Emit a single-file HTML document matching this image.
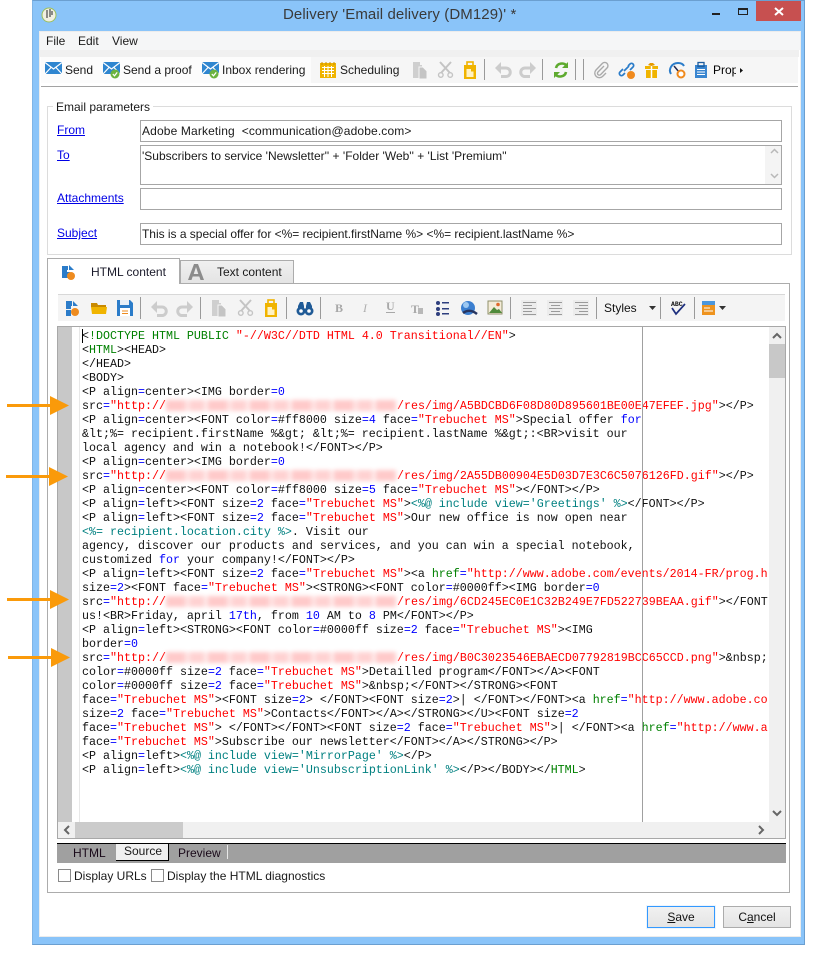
<!DOCTYPE html>
<html><head><meta charset="utf-8"><title>Delivery</title>
<style>
html,body{margin:0;padding:0;background:#fff}
body{width:825px;height:965px;position:relative;overflow:hidden;font-family:"Liberation Sans",sans-serif;font-size:12px;color:#1a1a1a}
.a{position:absolute;box-sizing:border-box}
.t{position:absolute;white-space:pre;line-height:16px;height:16px}
.l{color:#0000e6;text-decoration:underline}
.i{position:absolute;box-sizing:border-box;left:140px;width:642px;border:1px solid #a6a6a6;background:#fff;padding:2px 1px;white-space:pre;line-height:16px}
pre{position:absolute;margin:0;left:82px;top:329px;width:687px;height:490px;overflow:hidden;font-family:"Liberation Mono",monospace;font-size:11.667px;line-height:14px;color:#111}
.g{color:#008000}.r{color:#f00}.b{color:#00f}.c{color:#008080}
.z{display:inline-block;width:231px;height:11px;vertical-align:-2px;background:repeating-linear-gradient(90deg,#ffcaca 0 19px,#ffe4e4 19px 24px,#ffd2d2 24px 38px,#ffecec 38px 42px);filter:blur(2px)}
.s{position:absolute;width:1px;background:#9a9a9a}
u{text-underline-offset:1px}
</style></head><body>

<div class="a" style="left:32px;top:0;width:773px;height:945px;background:#8ac4f9;border:1px solid #6b9fd0;border-left-color:#7fb4e6"></div>
<div class="a" style="left:39px;top:31px;width:762px;height:906px;background:#fff;border:1px solid #ececec"></div>
<div class="a" style="left:756px;top:1px;width:45px;height:20px;background:#c75050"></div>
<div class="t" style="left:283px;top:7px;font-size:15px;color:#3a3a3a;letter-spacing:.1px">Delivery 'Email delivery (DM129)' *</div>

<div class="a" style="left:40px;top:32px;width:760px;height:18px;background:#f5f6f7"></div>
<div class="a" style="left:40px;top:50px;width:759px;height:7px;background:#f0f0f0"></div>
<div class="a" style="left:41px;top:57px;width:757px;height:26px;background:#f6f6f6"></div>
<div class="a" style="left:41px;top:57px;width:270px;height:26px;background:#fcfcfc"></div>
<div class="a" style="left:41px;top:86px;width:757px;height:1px;background:#a3a3a3"></div>
<div class="t" style="left:46px;top:33px">File</div>
<div class="t" style="left:78px;top:33px">Edit</div>
<div class="t" style="left:112px;top:33px">View</div>
<div class="t" style="left:65px;top:62px">Send</div>
<div class="t" style="left:123px;top:62px">Send a proof</div>
<div class="t" style="left:222px;top:62px">Inbox rendering</div>
<div class="t" style="left:340px;top:62px">Scheduling</div>
<div class="a" style="left:713px;top:62px;width:23px;height:16px;overflow:hidden;white-space:pre;line-height:16px;color:#000">Properties</div>
<div class="s" style="left:484px;top:59px;height:21px"></div>
<div class="s" style="left:542px;top:59px;height:21px"></div>
<div class="s" style="left:575px;top:59px;height:21px"></div>
<div class="s" style="left:583px;top:59px;height:21px"></div>

<div class="a" style="left:47px;top:106px;width:745px;height:149px;border:1px solid #dcdcdc"></div>
<div class="t" style="left:53px;top:99px;background:#fff;padding:0 3px;color:#1a1a1a">Email parameters</div>
<div class="t l" style="left:57px;top:122px">From</div>
<div class="t l" style="left:57px;top:147px">To</div>
<div class="t l" style="left:57px;top:190px">Attachments</div>
<div class="t l" style="left:57px;top:225px">Subject</div>
<div class="i" style="top:120px;height:22px;letter-spacing:.14px">Adobe Marketing  &lt;communication@adobe.com&gt;</div>
<div class="i" style="top:145px;height:40px">'Subscribers to service 'Newsletter'' + 'Folder 'Web'' + 'List 'Premium''</div>
<div class="a" style="left:765px;top:146px;width:16px;height:38px;background:#f4f4f4"></div>
<div class="i" style="top:188px;height:22px"></div>
<div class="i" style="top:223px;height:22px;letter-spacing:-.02px">This is a special offer for &lt;%= recipient.firstName %&gt; &lt;%= recipient.lastName %&gt;</div>

<div class="a" style="left:47px;top:283px;width:743px;height:610px;border:1px solid #acacac;background:#fff"></div>
<div class="a" style="left:180px;top:260px;width:114px;height:24px;border:1px solid #acacac;background:linear-gradient(#f0f0f0,#e4e4e4)"></div>
<div class="a" style="left:47px;top:258px;width:133px;height:26px;border:1px solid #acacac;border-bottom:0;background:#fff"></div>
<div class="t" style="left:91px;top:264px;color:#1a1a2a">HTML content</div>
<div class="t" style="left:217px;top:264px">Text content</div>

<div class="a" style="left:58px;top:294px;width:727px;height:27px;background:#f4f4f4;border-top:1px solid #d8d8d8"></div>
<div class="s" style="left:140px;top:297px;height:22px"></div>
<div class="s" style="left:200px;top:297px;height:22px"></div>
<div class="s" style="left:286px;top:297px;height:22px"></div>
<div class="s" style="left:320px;top:297px;height:22px"></div>
<div class="s" style="left:510px;top:297px;height:22px"></div>
<div class="s" style="left:596px;top:297px;height:22px"></div>
<div class="s" style="left:660px;top:297px;height:22px"></div>
<div class="s" style="left:694px;top:297px;height:22px"></div>
<div class="t" style="left:604px;top:300px;color:#111">Styles</div>

<div class="a" style="left:57px;top:326px;width:729px;height:513px;border:1px solid #a8a8a8;background:#fff"></div>
<div class="a" style="left:58px;top:327px;width:14px;height:495px;background:#c8c8c8"></div>
<div class="a" style="left:79px;top:327px;width:1px;height:495px;background:#e8e8e8"></div>
<div class="a" style="left:769px;top:327px;width:16px;height:511px;background:#f0f0f0"></div>
<div class="a" style="left:769px;top:344px;width:16px;height:34px;background:#c8c8c8"></div>
<div class="a" style="left:58px;top:822px;width:727px;height:16px;background:#f0f0f0"></div>
<div class="a" style="left:75px;top:822px;width:108px;height:16px;background:#cbcbcb"></div>

<pre>&lt;<span class="g">!DOCTYPE HTML PUBLIC</span> <span class="r">"-//W3C//DTD HTML 4.0 Transitional//EN"</span>&gt;
&lt;<span class="g">HTML</span>&gt;&lt;HEAD&gt;
&lt;/HEAD&gt;
&lt;BODY&gt;
&lt;P align<span class="b">=</span>center&gt;&lt;IMG border<span class="b">=0</span>
src<span class="b">=</span><span class="r">"http://<span class="z"></span>/res/img/A5BDCBD6F08D80D895601BE00E47EFEF.jpg"</span>&gt;&lt;/P&gt;
&lt;P align<span class="b">=</span>center&gt;&lt;FONT color<span class="b">=</span>#ff8000 size<span class="b">=4</span> face<span class="b">=</span><span class="r">"Trebuchet MS"</span>&gt;Special offer <span class="b">for</span>
&amp;lt;%= recipient.firstName %&amp;gt; &amp;lt;%= recipient.lastName %&amp;gt;:&lt;BR&gt;visit our
local agency and win a notebook!&lt;/FONT&gt;&lt;/P&gt;
&lt;P align<span class="b">=</span>center&gt;&lt;IMG border<span class="b">=0</span>
src<span class="b">=</span><span class="r">"http://<span class="z"></span>/res/img/2A55DB00904E5D03D7E3C6C5076126FD.gif"</span>&gt;&lt;/P&gt;
&lt;P align<span class="b">=</span>center&gt;&lt;FONT color<span class="b">=</span>#ff8000 size<span class="b">=5</span> face<span class="b">=</span><span class="r">"Trebuchet MS"</span>&gt;&lt;/FONT&gt;&lt;/P&gt;
&lt;P align<span class="b">=</span>left&gt;&lt;FONT size<span class="b">=2</span> face<span class="b">=</span><span class="r">"Trebuchet MS"</span>&gt;<span class="c">&lt;%@ include view='Greetings' %&gt;</span>&lt;/FONT&gt;&lt;/P&gt;
&lt;P align<span class="b">=</span>left&gt;&lt;FONT size<span class="b">=2</span> face<span class="b">=</span><span class="r">"Trebuchet MS"</span>&gt;Our new office is now open near
<span class="c">&lt;%= recipient.location.city %&gt;</span>. Visit our
agency, discover our products and services, and you can win a special notebook,
customized <span class="b">for</span> your company!&lt;/FONT&gt;&lt;/P&gt;
&lt;P align<span class="b">=</span>left&gt;&lt;FONT size<span class="b">=2</span> face<span class="b">=</span><span class="r">"Trebuchet MS"</span>&gt;&lt;a <span class="g">href</span><span class="b">=</span><span class="r">"http://www.adobe.com/events/2014-FR/prog.h</span>
size<span class="b">=2</span>&gt;&lt;FONT face<span class="b">=</span><span class="r">"Trebuchet MS"</span>&gt;&lt;STRONG&gt;&lt;FONT color<span class="b">=</span>#0000ff&gt;&lt;IMG border<span class="b">=0</span>
src<span class="b">=</span><span class="r">"http://<span class="z"></span>/res/img/6CD245EC0E1C32B249E7FD522739BEAA.gif"</span>&gt;&lt;/FONT
us!&lt;BR&gt;Friday, april <span class="b">17th</span>, from <span class="b">10</span> AM to <span class="b">8</span> PM&lt;/FONT&gt;&lt;/P&gt;
&lt;P align<span class="b">=</span>left&gt;&lt;STRONG&gt;&lt;FONT color<span class="b">=</span>#0000ff size<span class="b">=2</span> face<span class="b">=</span><span class="r">"Trebuchet MS"</span>&gt;&lt;IMG
border<span class="b">=0</span>
src<span class="b">=</span><span class="r">"http://<span class="z"></span>/res/img/B0C3023546EBAECD07792819BCC65CCD.png"</span>&gt;&amp;nbsp;
color<span class="b">=</span>#0000ff size<span class="b">=2</span> face<span class="b">=</span><span class="r">"Trebuchet MS"</span>&gt;Detailled program&lt;/FONT&gt;&lt;/A&gt;&lt;FONT
color<span class="b">=</span>#0000ff size<span class="b">=2</span> face<span class="b">=</span><span class="r">"Trebuchet MS"</span>&gt;&amp;nbsp;&lt;/FONT&gt;&lt;/STRONG&gt;&lt;FONT
face<span class="b">=</span><span class="r">"Trebuchet MS"</span>&gt;&lt;FONT size<span class="b">=2</span>&gt; &lt;/FONT&gt;&lt;FONT size<span class="b">=2</span>&gt;| &lt;/FONT&gt;&lt;/FONT&gt;&lt;a <span class="g">href</span><span class="b">=</span><span class="r">"http://www.adobe.co</span>
size<span class="b">=2</span> face<span class="b">=</span><span class="r">"Trebuchet MS"</span>&gt;Contacts&lt;/FONT&gt;&lt;/A&gt;&lt;/STRONG&gt;&lt;/U&gt;&lt;FONT size<span class="b">=2</span>
face<span class="b">=</span><span class="r">"Trebuchet MS"</span>&gt; &lt;/FONT&gt;&lt;/FONT&gt;&lt;FONT size<span class="b">=2</span> face<span class="b">=</span><span class="r">"Trebuchet MS"</span>&gt;| &lt;/FONT&gt;&lt;a <span class="g">href</span><span class="b">=</span><span class="r">"http://www.a</span>
face<span class="b">=</span><span class="r">"Trebuchet MS"</span>&gt;Subscribe our newsletter&lt;/FONT&gt;&lt;/A&gt;&lt;/STRONG&gt;&lt;/P&gt;
&lt;P align<span class="b">=</span>left&gt;<span class="c">&lt;%@ include view='MirrorPage' %&gt;</span>&lt;/P&gt;
&lt;P align<span class="b">=</span>left&gt;<span class="c">&lt;%@ include view='UnsubscriptionLink' %&gt;</span>&lt;/P&gt;&lt;/BODY&gt;&lt;/<span class="g">HTML</span>&gt;</pre>
<div class="a" style="left:82px;top:329px;width:1px;height:14px;background:#000"></div>
<div class="a" style="left:642px;top:327px;width:1px;height:495px;background:#a0a0a0"></div>

<div class="a" style="left:57px;top:843px;width:729px;height:20px;background:#a0a0a0;border-top:1px solid #000"></div>
<div class="a" style="left:116px;top:844px;width:53px;height:17px;background:#f0f0f0;border-right:1px solid #000;border-bottom:1px solid #000"></div>
<div class="a" style="left:227px;top:845px;width:1px;height:14px;background:#e8e8e8"></div>
<div class="t" style="left:73px;top:845px;color:#1a0a1a">HTML</div>
<div class="t" style="left:124px;top:843px">Source</div>
<div class="t" style="left:178px;top:845px;color:#1a0a1a">Preview</div>

<div class="a" style="left:58px;top:869px;width:13px;height:13px;border:1px solid #8a8a8a;background:#fff"></div>
<div class="t" style="left:74px;top:868px">Display URLs</div>
<div class="a" style="left:151px;top:869px;width:13px;height:13px;border:1px solid #8a8a8a;background:#fff"></div>
<div class="t" style="left:167px;top:868px">Display the HTML diagnostics</div>

<div class="a" style="left:647px;top:906px;width:68px;height:22px;border:1px solid #3399ff;background:linear-gradient(#f1f1f1,#e4e4e4);box-shadow:0 0 0 1px #edf5fd;text-align:center;line-height:20px;color:#111"><u>S</u>ave</div>
<div class="a" style="left:723px;top:906px;width:68px;height:22px;border:1px solid #acacac;background:linear-gradient(#f1f1f1,#e4e4e4);text-align:center;line-height:20px;color:#111">C<u>a</u>ncel</div>

<svg class="a" style="left:0;top:0" width="825" height="965" viewBox="0 0 825 965">
<defs>
<g id="mail"><rect x="0" y="0" width="17" height="12" fill="#2f86d0"/><path d="M0 .5 8.5 7 17 .5M0 12 6 5.5M17 12 11 5.5" fill="none" stroke="#fff" stroke-width="1.2"/></g>
<g id="ok"><circle cx="0" cy="0" r="4.5" fill="#6cb33f"/><path d="M-2.2 0 -.5 1.8 2.2-1.6" fill="none" stroke="#fff" stroke-width="1.2"/></g>
<g id="copy"><path d="M0 0H7V3H9V16H0Z" fill="#cfcfcf"/><path d="M6 5h4l4 4v8H6Z" fill="#c4c4c4" stroke="#f6f6f6"/></g>
<g id="cut" fill="none" stroke="#c4c4c4"><path d="M2 0 12 11M13 0 3 11" stroke-width="2"/><circle cx="2.8" cy="13" r="2.3" stroke-width="1.4"/><circle cx="12.2" cy="13" r="2.3" stroke-width="1.4"/></g>
<g id="paste"><rect x="0" y="3" width="12" height="14" fill="#f0b400"/><rect x="3" y="0" width="6" height="5" fill="none" stroke="#f0b400" stroke-width="1.6"/><rect x="2.500" y="7" width="7" height="8" fill="#fff2c4"/><path d="M7 7h2.500v2.500H7z" fill="#f0b400"/></g>
<g id="undo"><path d="M6 0V12L0 6Z" fill="#cccccc"/><path d="M5 6h6a4 4 0 0 1 0 8.500H6" fill="none" stroke="#cccccc" stroke-width="3"/></g>
<g id="al"><path d="M0 .5h13M0 3.500h9M0 6.500h13M0 9.500h9M0 12.500h13" stroke="#9a9a9a"/></g>
<g id="ac"><path d="M0 .5h13M2 3.500h9M0 6.500h13M2 9.500h9M0 12.500h13" stroke="#9a9a9a"/></g>
<g id="ar"><path d="M0 .5h13M4 3.500h9M0 6.500h13M4 9.500h9M0 12.500h13" stroke="#9a9a9a"/></g>
<path id="arrow" d="M0 0H43V3H0ZM43-8 62 1.500 43 11Z" fill="#fa9a0a"/>
</defs>

<!-- window buttons -->
<rect x="712" y="13" width="8" height="2" fill="#222"/>
<rect x="738.500" y="8.500" width="9" height="6" fill="none" stroke="#222"/><rect x="738" y="8" width="10" height="2" fill="#222"/>
<path d="M775 8 783 15M783 8 775 15" stroke="#fff" stroke-width="2"/>
<!-- app icon -->
<circle cx="49" cy="15" r="7" fill="#f1efe2" stroke="#9cbf5c"/><path d="M47 10v8M50 9v8M52 11v4" stroke="#555" stroke-width="1.3"/>

<!-- main toolbar -->
<use href="#mail" x="45" y="62"/>
<use href="#mail" x="103" y="62"/><use href="#ok" x="115" y="74"/>
<use href="#mail" x="202" y="62"/><use href="#ok" x="214" y="74"/>
<rect x="320" y="63" width="16" height="15" fill="#f0b400"/><path d="M322 62v3M326 62v3M330 62v3M334 62v3" stroke="#c98f00"/><path d="M322 67.500h12M322 70.500h12M322 73.500h12M324.500 66v11M328 66v11M331.500 66v11" stroke="#fff" stroke-width="1"/>
<use href="#copy" x="413" y="62"/>
<use href="#cut" x="438" y="62"/>
<use href="#paste" x="464" y="62"/>
<use href="#undo" x="495" y="62"/>
<use href="#undo" transform="translate(536 62) scale(-1 1)"/>
<path d="M556 68c1-5 8-6 11-2M566 72c-1 5-8 6-11 2" fill="none" stroke="#5eaa2f" stroke-width="2.600"/><path d="M568 62v6h-6ZM554 78v-6h6Z" fill="#5eaa2f"/>
<path d="M604 66 598 72a1.800 1.800 0 0 0 2.600 2.600L607 68a3.200 3.200 0 0 0-4.600-4.600L596 70a4.600 4.600 0 0 0 6.500 6.500L606 73" fill="none" stroke="#aaaaaa" stroke-width="1.400"/>
<path d="M628 66l2-2c2-2 5 1 3 3l-3 3M625 73l-2 2c-2 2-5-1-3-3l3-3M624 71l5-5" fill="none" stroke="#2b7cc9" stroke-width="1.700"/><circle cx="631" cy="75" r="4" fill="#f08a1d"/>
<rect x="645" y="66" width="13" height="3" fill="#f0b400"/><rect x="646" y="70" width="11" height="8" fill="#f0b400"/><path d="M651.500 66v12" stroke="#fff" stroke-width="1.500"/><path d="M648 65l3.500 1 3.500-1-2-2h-3Z" fill="#e59a00"/>
<path d="M671 74c-3-5 1-11 7-11 3 0 5 1 6 3" fill="none" stroke="#2b7cc9" stroke-width="2"/><path d="M674 66l5 6" stroke="#222a50" stroke-width="1.500"/><circle cx="681" cy="74" r="3.500" fill="#fff" stroke="#f08a1d" stroke-width="2"/>
<rect x="695" y="65" width="12" height="13" fill="#3a86d0"/><rect x="698" y="62.500" width="6" height="4" fill="none" stroke="#1d5c9e" stroke-width="1.300"/><path d="M697 69.500h8M697 72h8M697 74.500h8" stroke="#fff"/>
<path d="M740 68l3 2.500-3 2.500Z" fill="#111"/>

<!-- tab icons -->
<path d="M62 266h6v4h-1v2h3v6h-8Z" fill="#2b7cc9"/><path d="M69 265l5 5h-5Z" fill="#2b7cc9"/><circle cx="71" cy="276" r="4" fill="#ee8b1f"/>
<path d="M188 280l6-16h4l6 16h-3.500l-1.200-3.500h-6.600L191.500 280ZM193.700 274h4.600L196 267Z" fill="#8c8c8c"/>

<!-- inner toolbar -->
<path d="M66 301h6v5h-1v3h-5ZM73 301l5 5h-5Z M66 310h5v6h-5Z" fill="#2b7cc9"/><circle cx="75" cy="312" r="4" fill="#ee8b1f"/>
<path d="M91 303h6l1 2h8v2H91Z" fill="#c98a00"/><path d="M91 307h16l-1 7H92Z" fill="#f0b400"/>
<path d="M117 300h13l3 3v13h-16Z" fill="#2b7cc9"/><rect x="120" y="300" width="9" height="5" fill="#e8f0f8"/><rect x="120" y="308" width="10" height="8" fill="#fff"/><path d="M122 311h6M122 313.500h6" stroke="#ee8b1f"/>
<use href="#undo" x="151" y="301"/>
<use href="#undo" transform="translate(193 301) scale(-1 1)"/>
<use href="#copy" x="212" y="300"/>
<use href="#cut" x="238" y="300"/>
<use href="#paste" x="265" y="300"/>
<g fill="#1f5a96"><circle cx="301" cy="311" r="4.500"/><circle cx="309" cy="311" r="4.500"/><path d="M298 306l2-4h3l1 4v5h-6ZM312 306l-2-4h-3l-1 4v5h6Z"/></g><circle cx="301" cy="311" r="1.800" fill="#fff"/><circle cx="309" cy="311" r="1.800" fill="#fff"/>
<text x="335" y="312" font-family="Liberation Serif" font-size="12" font-weight="bold" fill="#a8a8a8">B</text>
<text x="363" y="312" font-family="Liberation Serif" font-size="12" font-style="italic" fill="#b0b0b0">I</text>
<text x="386" y="310" font-family="Liberation Serif" font-size="12" font-weight="bold" fill="#a8a8a8">U</text><rect x="386" y="312" width="9" height="1" fill="#a8a8a8"/>
<text x="411" y="313" font-family="Liberation Serif" font-size="12" font-weight="bold" fill="#a8a8a8">T</text><rect x="418" y="308" width="5" height="6" fill="#b8b8b8"/>
<g fill="#2e3f7e"><circle cx="438" cy="303" r="2"/><circle cx="438" cy="309" r="2"/><circle cx="438" cy="314" r="2"/><rect x="442" y="302" width="7" height="1.500"/><rect x="442" y="308" width="7" height="1.500"/><rect x="442" y="313" width="7" height="1.500"/></g>
<circle cx="468" cy="308" r="7" fill="#3b7fd0"/><circle cx="466" cy="305" r="3" fill="#9cc8f2"/><path d="M463 313c4-3 9-3 14 1" fill="none" stroke="#27355f" stroke-width="2.500"/>
<rect x="488" y="301" width="14" height="13" fill="#f4ecd8" stroke="#8f8f6a"/><path d="M489 313l5-6 3 3 2-1 3 4Z" fill="#4f8a3a"/><circle cx="498" cy="304.500" r="1.800" fill="#e06a2a"/>
<rect x="521" y="300" width="16" height="16" fill="#ececec"/><use href="#al" x="523" y="302"/>
<rect x="547" y="300" width="16" height="16" fill="#ececec"/><use href="#ac" x="549" y="302"/>
<rect x="573" y="300" width="16" height="16" fill="#ececec"/><use href="#ar" x="575" y="302"/>
<path d="M649 306h7l-3.500 4Z" fill="#333"/>
<text x="671" y="306" font-family="Liberation Mono" font-size="6.500" font-weight="bold" fill="#111">ABC</text><path d="M672 308l4 6 9-10" fill="none" stroke="#1d2f7e" stroke-width="1.700"/>
<rect x="702" y="301" width="13" height="14" fill="#ee931e"/><rect x="702" y="301" width="13" height="4" fill="#4c97dc"/><path d="M704 308h6M704 311h9" stroke="#fff"/>
<path d="M719 306h7l-3.500 4Z" fill="#333"/>

<!-- scroll arrows -->
<path d="M771 153l3.500-3.500 3.500 3.500M771 174l3.500 3.500 3.500-3.500" fill="none" stroke="#b8b8b8" stroke-width="1.500"/>
<path d="M773 338l4-4 4 4M773 811l4 4 4-4" fill="none" stroke="#666" stroke-width="2"/>
<path d="M69 826l-4 4 4 4M759 826l4 4-4 4" fill="none" stroke="#666" stroke-width="2"/>

<!-- orange arrows -->
<use href="#arrow" x="7" y="404"/>
<use href="#arrow" x="6" y="475"/>
<use href="#arrow" x="7" y="598"/>
<use href="#arrow" x="8" y="656"/>
</svg>
</body></html>
